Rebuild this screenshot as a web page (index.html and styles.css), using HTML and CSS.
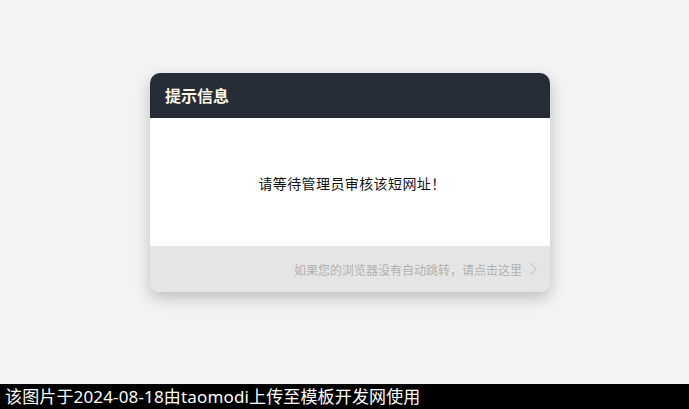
FILE: index.html
```html
<!DOCTYPE html>
<html lang="zh-CN">
<head>
<meta charset="utf-8">
<link rel="stylesheet" href="styles.css">
</head>
<body>
<div class="page">
  <div class="card">
    <div class="card-head">提示信息</div>
    <div class="card-body">请等待管理员审核该短网址！</div>
    <div class="card-foot">
      <span class="foot-text">如果您的浏览器没有自动跳转，请点击这里</span>
      <svg class="chev" width="8" height="14" viewBox="0 0 8 14"><path d="M1 1 L7 7 L1 13" fill="none" stroke="#c8c8c8" stroke-width="1.2"/></svg>
    </div>
  </div>
</div>
<div class="watermark">该图片于2024-08-18由taomodi上传至模板开发网使用</div>
</body>
</html>
```
FILE: styles.css
```css
html, body { margin: 0; padding: 0; }
body {
  background: #f3f3f3;
  font-family: "Noto Sans CJK SC", "Noto Sans", sans-serif;
  width: 689px;
  height: 409px;
  overflow: hidden;
  position: relative;
}
.page {
  padding-top: 73px;
  padding-left: 150px;
  display: flex;
}
.card {
  width: 400px;
  border-radius: 10px;
  overflow: hidden;
  box-shadow: 0 6px 16px rgba(0,0,0,0.22);
  background: #fff;
}
.card-head {
  height: 45px;
  background: #262c38;
  color: #fdf6e3;
  font-size: 16px;
  font-weight: bold;
  line-height: 45px;
  padding-left: 15px;
}
.card-body {
  height: 128px;
  display: flex;
  align-items: center;
  justify-content: center;
  font-size: 14px;
  letter-spacing: 0.4px;
  color: #111;
  padding-top: 2px;
  padding-left: 4px;
  box-sizing: border-box;
}
.card-foot {
  height: 46px;
  background: #e5e5e5;
  display: flex;
  align-items: center;
  justify-content: flex-end;
  padding-right: 13px;
  gap: 7px;
  font-size: 12px;
  color: #b0b0b0;
}
.chev { display: block; }
.watermark {
  position: absolute;
  left: 0; right: 0; bottom: 0;
  height: 25px;
  background: #000;
  color: #fff;
  font-family: "Noto Sans", "Noto Sans CJK SC", sans-serif;
  font-size: 17px;
  letter-spacing: 0.15px;
  line-height: 25px;
  padding-left: 5px;
}
```
